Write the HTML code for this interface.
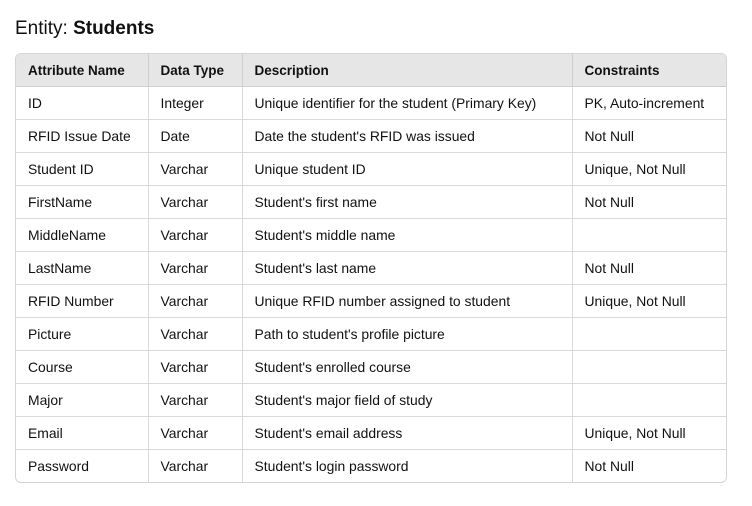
<!DOCTYPE html>
<html><head><style>
body{margin:0;background:#fff;font-family:"Liberation Sans",sans-serif;color:#111;}
h2{position:absolute;left:15px;top:17px;margin:0;font-size:19px;font-weight:normal;line-height:24px;}
h2 b{font-weight:bold}
.wrap{position:absolute;left:15px;top:53px;width:710px;border:1px solid #d4d4d4;border-radius:6px;overflow:hidden;}
table{border-collapse:collapse;width:100%;font-size:13.9px;table-layout:fixed;}
td,th{height:32px;padding:0 0 0 12px;text-align:left;border-right:1px solid #d9d9d9;border-bottom:1px solid #d9d9d9;white-space:nowrap;}
th{background:#e6e6e6;font-weight:bold;border-color:#cfcfcf;font-size:13.5px;}
tr td:last-child,tr th:last-child{border-right:none}
tr:last-child td{border-bottom:none}
</style></head><body>
<h2>Entity: <b>Students</b></h2>
<div class="wrap"><table>
<colgroup><col style="width:132px"><col style="width:94px"><col style="width:330px"><col></colgroup>
<tr><th>Attribute Name</th><th>Data Type</th><th>Description</th><th>Constraints</th></tr>
<tr><td>ID</td><td>Integer</td><td>Unique identifier for the student (Primary Key)</td><td>PK, Auto-increment</td></tr>
<tr><td>RFID Issue Date</td><td>Date</td><td>Date the student's RFID was issued</td><td>Not Null</td></tr>
<tr><td>Student ID</td><td>Varchar</td><td>Unique student ID</td><td>Unique, Not Null</td></tr>
<tr><td>FirstName</td><td>Varchar</td><td>Student's first name</td><td>Not Null</td></tr>
<tr><td>MiddleName</td><td>Varchar</td><td>Student's middle name</td><td></td></tr>
<tr><td>LastName</td><td>Varchar</td><td>Student's last name</td><td>Not Null</td></tr>
<tr><td>RFID Number</td><td>Varchar</td><td>Unique RFID number assigned to student</td><td>Unique, Not Null</td></tr>
<tr><td>Picture</td><td>Varchar</td><td>Path to student's profile picture</td><td></td></tr>
<tr><td>Course</td><td>Varchar</td><td>Student's enrolled course</td><td></td></tr>
<tr><td>Major</td><td>Varchar</td><td>Student's major field of study</td><td></td></tr>
<tr><td>Email</td><td>Varchar</td><td>Student's email address</td><td>Unique, Not Null</td></tr>
<tr><td>Password</td><td>Varchar</td><td>Student's login password</td><td>Not Null</td></tr>
</table></div>
</body></html>
